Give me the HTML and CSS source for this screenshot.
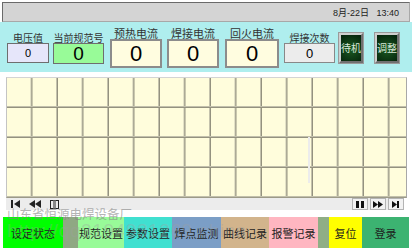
FILE: index.html
```html
<!DOCTYPE html>
<html lang="zh-CN">
<head>
  <meta charset="UTF-8" />
  <title>焊接监控</title>
  <link rel="stylesheet" href="styles.css">
</head>
<body>

  <!-- status bar -->
  <div class="topbar"><span class="clock">8月-22日&nbsp;&nbsp;&nbsp;13:40</span></div>

  <!-- live values -->
  <div class="panel">
    <div class="field volt">
      <span class="label">电压值</span>
      <div class="box">0</div>
    </div>
    <div class="field spec">
      <span class="label">当前规范号</span>
      <div class="box">0</div>
    </div>
    <div class="field big pre">
      <span class="label">预热电流</span>
      <div class="box">0</div>
    </div>
    <div class="field big weld">
      <span class="label">焊接电流</span>
      <div class="box">0</div>
    </div>
    <div class="field big temper">
      <span class="label">回火电流</span>
      <div class="box">0</div>
    </div>
    <div class="field count">
      <span class="label">焊接次数</span>
      <div class="box">0</div>
    </div>
    <button class="mode-btn standby">待机</button>
    <button class="mode-btn">调整</button>
  </div>

  <!-- curve area -->
  <div class="chart">
    <div class="cursor"></div>
  </div>

  <!-- trend playback -->
  <div class="player">
    <div class="player-left">
      <svg width="9" height="8" viewBox="0 0 9 8"><rect x="0" y="0" width="2" height="8" fill="#222"/><polygon points="9,0 9,8 3,4" fill="#222"/></svg>
      <svg width="14" height="8" viewBox="0 0 14 8"><polygon points="7,0 7,8 1,4" fill="#222"/><polygon points="13,0 13,8 7,4" fill="#222"/></svg>
      <svg width="9" height="9" viewBox="0 0 9 9"><rect x="0.5" y="0.5" width="8" height="8" fill="none" stroke="#222"/><rect x="3" y="0.5" width="3" height="8" fill="#888"/></svg>
    </div>
    <div class="player-right">
      <span class="pbtn"><svg width="9" height="7" viewBox="0 0 9 7"><rect x="0" y="0" width="3" height="7" fill="#111"/><rect x="5" y="0" width="3" height="7" fill="#111"/></svg></span>
      <span class="pbtn"><svg width="11" height="7" viewBox="0 0 11 7"><polygon points="0,0 5,3.5 0,7" fill="#111"/><polygon points="5,0 10,3.5 5,7" fill="#111"/></svg></span>
      <span class="pbtn"><svg width="8" height="7" viewBox="0 0 8 7"><polygon points="0,0 5,3.5 0,7" fill="#111"/><rect x="5" y="0" width="2" height="7" fill="#111"/></svg></span>
    </div>
  </div>

  <!-- menu -->
  <div class="footer">
    <span class="mark-company">山东省恒源电焊设备厂</span>
    <span class="mark-url">http://qq3194931269.china</span>
    <nav class="menu">
      <span class="tab t-state">设定状态</span>
      <span class="tab t-gap"></span>
      <span class="tab t-spec">规范设置</span>
      <span class="tab t-param">参数设置</span>
      <span class="tab t-monitor">焊点监测</span>
      <span class="tab t-curve">曲线记录</span>
      <span class="tab t-alarm">报警记录</span>
      <span class="tab t-gap2"></span>
      <span class="tab t-reset">复位</span>
      <span class="tab t-login">登录</span>
    </nav>
  </div>

</body>
</html>
```

FILE: styles.css
```css
body {
  margin: 0;
  width: 412px;
  height: 249px;
  overflow: hidden;
  background-color: #fff;
  font-family: "Noto Sans CJK SC", sans-serif;
  color: #222;
}
.topbar {
  margin: 2px 2px 0 2px;
  height: 18px;
  background-color: #d4d4d4;
  border-top: 1px solid #6a6a6a;
  border-left: 1px solid #6a6a6a;
  border-right: 1px solid #a8a8a8;
  border-bottom: 1px solid #a8a8a8;
  display: flex;
  justify-content: flex-end;
  align-items: center;
  padding-right: 10px;
}
.clock {
  font-family: "Liberation Sans", "Noto Sans CJK SC", sans-serif;
  font-size: 9px;
  color: #222;
}
.panel {
  height: 50px;
  background-color: #afeeee;
  display: flex;
  align-items: flex-start;
  padding-left: 7px;
  box-sizing: border-box;
}
.field {
  display: flex;
  flex-direction: column;
  align-items: center;
  margin-top: 11px;
}
.label {
  font-size: 10px;
  line-height: 10px;
  height: 10px;
  color: #333;
  white-space: nowrap;
}
.box {
  width: 100%;
  height: 20px;
  box-sizing: border-box;
  border: 1px solid #6e6e6e;
  display: flex;
  align-items: center;
  justify-content: center;
  font-family: "Liberation Sans", sans-serif;
  color: #000;
}
.volt { width: 42px; margin-right: 4px; }
.volt .box { background-color: #e6e6fa; font-size: 11px; }
.spec { width: 51px; margin-right: 6px; }
.spec .box { background-color: #98fb98; font-size: 19px; height: 21px; }
.big { margin-top: 6px; }
.big .label { font-size: 11px; line-height: 11px; height: 11px; }
.big .box {
  height: 29px;
  border: 2px solid #8c8c8c;
  background-color: #fffde0;
  font-size: 22px;
}
.pre { width: 52px; margin-right: 5px; }
.weld { width: 52px; margin-right: 6px; }
.temper { width: 54px; margin-right: 5px; }
.count { width: 51px; margin-right: 4px; }
.count .box { background-color: #ececec; font-size: 13px; border-color: #888; }
.mode-btn {
  margin: 11px 12px 0 0;
  width: 24px;
  height: 30px;
  padding: 0;
  box-sizing: border-box;
  border: 2px solid;
  border-color: #cfcfcf #707070 #707070 #cfcfcf;
  box-shadow: 0 0 0 1px #9a9a9a;
  background: radial-gradient(circle at 50% 55%, #1c5a22, #03200a);
  color: #d8e8d8;
  font-family: "Noto Sans CJK SC", sans-serif;
  font-size: 10px;
  line-height: 1;
  white-space: nowrap;
  overflow: visible;
  cursor: pointer;
}
.chart {
  position: relative;
  margin: 5px 0 0 6px;
  width: 401px;
  height: 121px;
  box-sizing: border-box;
  border-left: 1px solid #c4c4c4;
  border-top: 1px solid #d4d4d4;
  border-right: 1px solid #a8a8a8;
  border-bottom: 1px solid #9c9a88;
  background-color: #fffddc;
  background-image:
    linear-gradient(to bottom, transparent 28px, #c2c0ac 28px, #c2c0ac 29px, #94927f 29px),
    linear-gradient(to right, transparent 23.5px, #c2c0ac 23.5px, #c2c0ac 24.5px, #94927f 24.5px);
  background-size: 100% 30px, 25.5px 100%;
}
.cursor {
  position: absolute;
  left: 301px;
  top: 59px;
  width: 2px;
  height: 46px;
  background-color: #ececec;
}
.player {
  margin-left: 6px;
  width: 398px;
  height: 12px;
  background-color: #ececec;
  display: flex;
  justify-content: space-between;
  align-items: center;
}
.player-left {
  display: flex;
  align-items: center;
  gap: 8px;
  padding-left: 5px;
}
.player-right {
  display: flex;
  gap: 2px;
  height: 12px;
}
.pbtn {
  width: 16px;
  height: 12px;
  box-sizing: border-box;
  border: 1px solid #b4b4b4;
  background-color: #f2f2f2;
  display: flex;
  align-items: center;
  justify-content: center;
}
.footer {
  position: relative;
  padding-top: 7px;
}
.mark-company {
  position: absolute;
  left: 7px;
  top: -6px;
  font-size: 12.5px;
  color: rgba(130, 130, 130, 0.6);
  white-space: nowrap;
  z-index: 2;
}
.mark-url {
  position: absolute;
  left: 7px;
  top: 10px;
  font-family: "Liberation Sans", sans-serif;
  font-size: 19px;
  letter-spacing: 0.6px;
  color: rgba(160, 160, 160, 0.35);
  white-space: nowrap;
  z-index: 2;
}
.menu {
  display: flex;
  margin-left: 3px;
  height: 31px;
}
.tab {
  display: flex;
  align-items: center;
  justify-content: center;
  font-size: 11px;
  color: #1e1e1e;
  white-space: nowrap;
}
.t-state { width: 60px; background-color: #00ff00; }
.t-gap { width: 15px; background-color: #8fa883; }
.t-spec { width: 46px; background-color: #98fb98; }
.t-param { width: 48px; background-color: #40e0d0; }
.t-monitor { width: 49px; background-color: #7b9ec6; }
.t-curve { width: 48px; background-color: #d2b48c; }
.t-alarm { width: 49px; background-color: #ffb6c1; }
.t-gap2 { width: 11px; background-color: #8fae86; }
.t-reset { width: 33px; background-color: #ffff00; }
.t-login { width: 47px; background-color: #3cb371; }
```
